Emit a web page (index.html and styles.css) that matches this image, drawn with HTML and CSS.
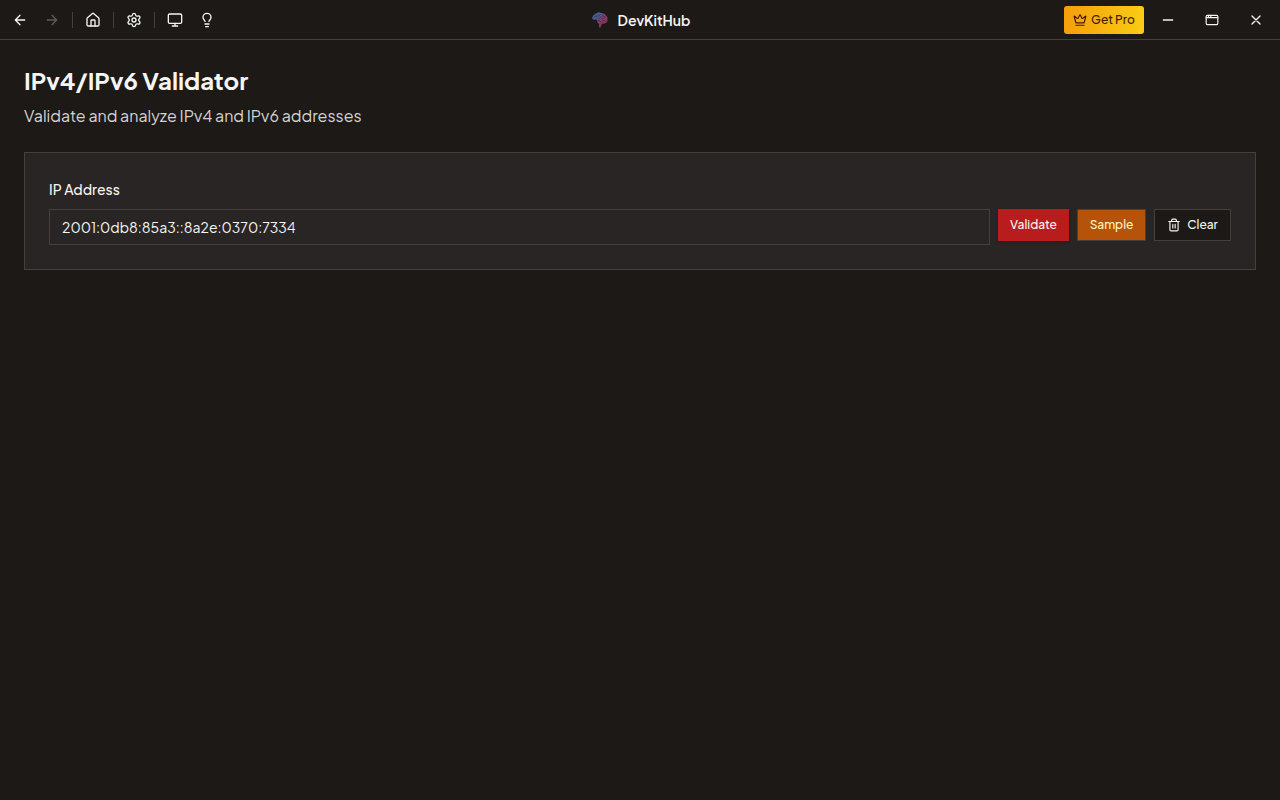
FILE: index.html
```html
<!DOCTYPE html>
<html lang="en">
<head>
<meta charset="utf-8">
<meta name="viewport" content="width=device-width, initial-scale=1">
<title>DevKitHub</title>
<link rel="stylesheet" href="styles.css">
</head>
<body>
<header class="titlebar">
  <nav class="tools" aria-label="Main">
    <button class="icon-button" type="button" aria-label="Back"><svg class="icon" viewBox="0 0 24 24"><path d="m12 19-7-7 7-7M19 12H5"/></svg></button>
    <button class="icon-button" type="button" aria-label="Forward" disabled><svg class="icon" viewBox="0 0 24 24"><path d="M5 12h14M12 5l7 7-7 7"/></svg></button>
    <span class="separator"></span>
    <button class="icon-button" type="button" aria-label="Home"><svg class="icon" viewBox="0 0 24 24"><path d="M15 21v-8a1 1 0 0 0-1-1h-4a1 1 0 0 0-1 1v8"/><path d="M3 10a2 2 0 0 1 .709-1.528l7-5.999a2 2 0 0 1 2.582 0l7 5.999A2 2 0 0 1 21 10v9a2 2 0 0 1-2 2H5a2 2 0 0 1-2-2z"/></svg></button>
    <span class="separator"></span>
    <button class="icon-button" type="button" aria-label="Settings"><svg class="icon" viewBox="0 0 24 24"><path d="M9.671 4.136a2.34 2.34 0 0 1 4.659 0 2.34 2.34 0 0 0 3.319 1.915 2.34 2.34 0 0 1 2.33 4.033 2.34 2.34 0 0 0 0 3.831 2.34 2.34 0 0 1-2.33 4.033 2.34 2.34 0 0 0-3.319 1.915 2.34 2.34 0 0 1-4.659 0 2.34 2.34 0 0 0-3.32-1.915 2.34 2.34 0 0 1-2.33-4.033 2.34 2.34 0 0 0 0-3.831A2.34 2.34 0 0 1 6.35 6.051a2.34 2.34 0 0 0 3.319-1.915"/><circle cx="12" cy="12" r="3"/></svg></button>
    <span class="separator"></span>
    <button class="icon-button" type="button" aria-label="Display"><svg class="icon" viewBox="0 0 24 24"><rect width="20" height="14" x="2" y="3" rx="2"/><path d="M8 21h8M12 17v4"/></svg></button>
    <button class="icon-button" type="button" aria-label="Tips"><svg class="icon" viewBox="0 0 24 24"><path d="M15 14c.2-1 .7-1.700 1.500-2.500 1-.9 1.500-2.200 1.500-3.500A6 6 0 0 0 6 8c0 1 .2 2.200 1.500 3.500.7.7 1.300 1.500 1.500 2.500M9 18h6M10 22h4"/></svg></button>
  </nav>
  <div class="brand">
    <svg class="logo" viewBox="0 0 16 16" aria-hidden="true">
      <defs><linearGradient id="brain" x1="0" y1="0" x2="1" y2="1"><stop offset="0" stop-color="#2f76a8"/><stop offset=".35" stop-color="#5b5288"/><stop offset=".55" stop-color="#85406f"/><stop offset="1" stop-color="#8c1c52"/></linearGradient></defs>
      <path fill="url(#brain)" d="M.3 6.800C0 4.800 1.200 2.900 3 2.300 4.600.7 7.300.2 9 1c2-.3 3.900.7 4.500 2.200 1.500.7 2.300 2.400 2 3.900.3 1.600-.3 3.500-1.800 4-1.200.9-2.500.9-3.800.3L8.600 15.600H7L7.100 11.800 5.500 10.800 5.300 8.400 4 7.300 2 7.900z"/>
      <path fill="none" stroke="#1c1917" stroke-opacity=".6" stroke-width=".8" d="M1.500 5.500l2-1.500 2 1.200M5 2.500l1.500 1.500L8.500 2.500M6.500 6.500l2-1.200 2 1.700 2-1.200M10.500 2.500l.5 2 2.500.5M6 8.500l2 .2 1 2M10 9l2-.8 1.500 1.500"/>
    </svg>
    <span>DevKitHub</span>
  </div>
  <div class="window-actions">
    <button class="pro-button" type="button"><svg class="crown" viewBox="0 0 24 24"><path d="M11.562 3.266a.5.5 0 0 1 .876 0L15.390 8.870a1 1 0 0 0 1.516.294L21.183 5.500a.5.5 0 0 1 .798.519l-2.834 10.246a1 1 0 0 1-.956.734H5.810a1 1 0 0 1-.957-.734L2.020 6.020a.5.5 0 0 1 .798-.519l4.276 3.664a1 1 0 0 0 1.516-.294zM5 21h14"/></svg>Get Pro</button>
    <button class="window-button" type="button" aria-label="Minimize"><svg class="icon" viewBox="0 0 24 24"><path d="M5 12h14"/></svg></button>
    <button class="window-button" type="button" aria-label="Maximize"><svg class="icon maximize" viewBox="0 0 24 24"><rect x="2" y="4" width="20" height="16" rx="2"/><path d="M10 4v4M2 8h20M6 4v4"/></svg></button>
    <button class="window-button" type="button" aria-label="Close"><svg class="icon" viewBox="0 0 24 24"><path d="M18 6 6 18M6 6l12 12"/></svg></button>
  </div>
</header>
<main class="page">
  <h1 class="title">IPv4/IPv6 Validator</h1>
  <p class="subtitle">Validate and analyze IPv4 and IPv6 addresses</p>
  <form class="card">
    <label class="label" for="address">IP Address</label>
    <div class="row">
      <input class="address" id="address" type="text" value="2001:0db8:85a3::8a2e:0370:7334" spellcheck="false">
      <button class="button validate" type="button">Validate</button>
      <button class="button sample" type="button">Sample</button>
      <button class="button clear" type="button"><svg class="trash" viewBox="0 0 24 24"><path d="M3 6h18M19 6v14a2 2 0 0 1-2 2H7a2 2 0 0 1-2-2V6M8 6V4a2 2 0 0 1 2-2h4a2 2 0 0 1 2 2v2M10 11v6M14 11v6"/></svg>Clear</button>
    </div>
  </form>
</main>
</body>
</html>
```
FILE: styles.css
```css
* { box-sizing: border-box; }
body {
  margin: 0;
  min-height: 100vh;
  background: #1c1917;
  color: #f5f5f4;
  font-family: "Plus Jakarta Sans", Inter, sans-serif;
}
button, input { font: inherit; color: inherit; }
button { border: 0; padding: 0; background: transparent; }
svg { flex: none; }
.titlebar {
  display: grid;
  grid-template-columns: 1fr auto 1fr;
  align-items: center;
  height: 40px;
  padding: 0 4px;
  border-bottom: 1px solid #44403c;
}
.tools, .window-actions, .brand, .icon-button, .window-button, .pro-button, .button {
  display: flex;
  align-items: center;
}
.icon-button, .window-button, .button, .pro-button { justify-content: center; }
.icon-button { width: 32px; height: 32px; }
.icon-button:disabled { opacity: .3; }
.icon, .crown, .trash {
  fill: none;
  stroke: currentColor;
  stroke-width: 2;
  stroke-linecap: round;
  stroke-linejoin: round;
}
.icon { width: 16px; height: 16px; }
.maximize { width: 14px; height: 14px; }
.separator { width: 1px; height: 16px; margin: 0 4px; background: #44403c; }
.brand { gap: 10px; padding-left: 2px; font-size: 14px; font-weight: 600; line-height: 20px; }
.logo { width: 16px; height: 16px; }
.window-actions { justify-content: flex-end; gap: 4px; }
.window-button { width: 40px; height: 32px; }
.pro-button {
  width: 80px;
  height: 28px;
  gap: 4px;
  border-radius: 3px;
  background: linear-gradient(to right, #f59e0b, #facc15);
  color: #451a03;
  font-size: 12px;
  font-weight: 500;
}
.crown { width: 14px; height: 14px; }
.page { padding: 24px; }
.title { margin: 0; font-size: 24px; font-weight: 700; line-height: 32px; }
.subtitle { margin: 8px 0 24px; color: #d6d3d1; font-size: 16px; line-height: 24px; }
.card { padding: 24px; border: 1px solid #44403c; background: #292524; }
.label { display: block; margin: 2px 0 10px; font-size: 14px; font-weight: 500; line-height: 20px; }
.row { display: flex; align-items: flex-start; gap: 8px; }
.address {
  flex: 1;
  min-width: 0;
  height: 36px;
  padding: 0 12px;
  border: 1px solid #44403c;
  border-radius: 0;
  background: transparent;
  font-size: 14px;
}
.button {
  height: 32px;
  padding: 0 12px;
  border: 1px solid #44403c;
  font-size: 12px;
  font-weight: 500;
  line-height: 16px;
}
.validate { width: 71px; border: 0; background: #b91c1c; box-shadow: 0 1px 3px #0003; }
.sample { width: 69px; background: #b45309; color: #fef3c7; }
.clear { width: 77px; gap: 6px; background: #1c1917; }
.trash { width: 14px; height: 14px; }
```
